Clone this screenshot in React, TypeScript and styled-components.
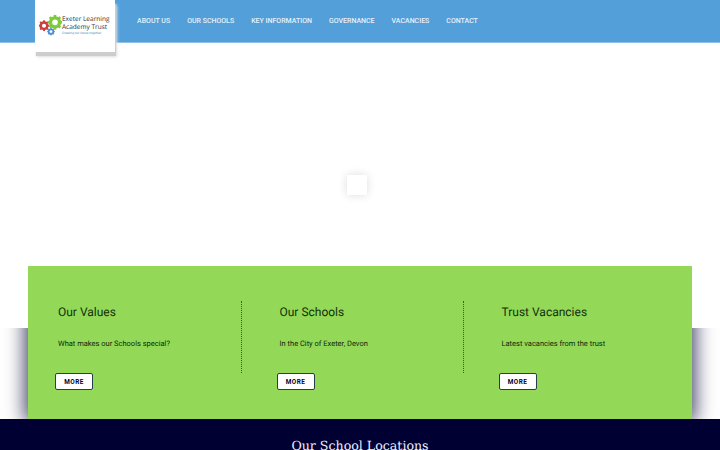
import React from "react";
import styled, { createGlobalStyle } from "styled-components";

const Global = createGlobalStyle`
  html, body { margin: 0; padding: 0; background: #fff; }
  body { font-family: Roboto, "Liberation Sans", sans-serif; overflow: hidden; height: 450px; text-rendering: geometricPrecision; }
`;
const Page = styled.div`
  width: 720px; height: 450px; overflow: hidden; display: flex; flex-direction: column;
`;
const Header = styled.header`
  height: 43px; flex: none; box-sizing: border-box; background: #529fd9; border-bottom: 1px solid #8cc0e8;
  display: flex; padding-left: 35px; position: relative; z-index: 4;
`;
const LogoCard = styled.div`
  width: 80px; height: 52px; flex: none; background: #fff; display: flex; align-items: center;
  padding: 0 0 0 4px; box-sizing: border-box;
  box-shadow: 1px 4px 1px 0 #cdcdcd, 2px 5px 3px #e2e2e2;
`;
const LogoText = styled.div`
  display: flex; flex-direction: column; align-items: flex-start; color: #2e2e2e; margin-top: -1px;
`;
const LogoLine = styled.span`
  font-size: 6.5px; line-height: 8.2px; font-family: "Open Sans", sans-serif; font-weight: 500; white-space: nowrap;
`;
const LogoTag = styled.span`
  font-size: 3.2px; line-height: 5px; color: #4a90c8; white-space: nowrap;
`;
const Nav = styled.nav`
  display: flex; gap: 17px; padding-left: 22px; align-items: center; height: 41px;
`;
const NavLink = styled.a`
  color: #e6f1fa; font-size: 7px; font-weight: 500; white-space: nowrap;
`;
const Hero = styled.div`
  height: 223px; flex: none; background: #fff; display: flex; align-items: flex-start; justify-content: center;
  padding: 132px 7px 0 0; box-sizing: border-box;
`;
const Loader = styled.div`
  width: 20px; height: 20px; background: #fff; box-shadow: 0 0 10px rgba(0,0,0,.14);
`;
const CardBand = styled.section`
  flex: none; padding: 0 28px 0 27.5px; position: relative; z-index: 2;
`;
const Card = styled.div`
  height: 153px; background: #93d957; position: relative;
  display: grid; grid-template-columns: 214px 222px 1fr; padding-top: 35px; box-sizing: border-box;
  &::before {
    content: ""; position: absolute; inset: 0; z-index: -1;
    box-shadow: 0 0 18px 3px rgba(0,0,51,.76);
    clip-path: inset(62px -40px 0 -40px);
  }
`;
const Col = styled.div<{ $first?: boolean; $last?: boolean }>`
  padding-left: ${p => (p.$first ? 30.5 : 38)}px; height: 72px; position: relative;
  border-right: ${p => (p.$last ? "0" : "1px dotted #3a5a30")};
  display: flex; flex-direction: column; align-items: flex-start;
`;
const Title = styled.h3`
  margin: 1px 0 0; font-size: 12px; line-height: 20px; font-weight: 400; color: #12300c; white-space: nowrap;
`;
const Body = styled.p`
  margin: 16px 0 0; font-size: 7.5px; line-height: 12px; color: #10280c; white-space: nowrap;
`;
const More = styled.button`
  margin: 23px 0 0 -3px; width: 38px; height: 17px; box-sizing: border-box; background: #fff;
  border: 1.5px solid #24404a; border-radius: 2px; font-family: Roboto, sans-serif; font-size: 6.4px;
  font-weight: 700; letter-spacing: 0.4px; color: #000033; padding: 0; flex: none;
`;
const Footer = styled.footer`
  flex: 1; background: #000033; display: flex; justify-content: center; padding-top: 18px;
  box-sizing: border-box; position: relative; z-index: 3;
`;
const FooterTitle = styled.h2`
  margin: 0; font-family: "DejaVu Serif", serif; font-weight: 400; font-size: 12.6px; line-height: 18px;
  color: #eef; white-space: nowrap;
`;

const Gear = ({ cx, cy, r, color }: { cx: number; cy: number; r: number; color: string }) => (
  <g>
    <circle cx={cx} cy={cy} r={r * 0.68} fill="none" stroke={color} strokeWidth={r * 0.5} />
    {Array.from({ length: 8 }).map((_, i) => (
      <rect
        key={i}
        x={cx - r * 0.2}
        y={cy - r * 1.12}
        width={r * 0.4}
        height={r * 0.4}
        fill={color}
        transform={`rotate(${i * 45} ${cx} ${cy})`}
      />
    ))}
  </g>
);

const GearLogo = styled.svg`
  width: 23px; height: 24px; flex: none;
`;

const items = [
  { t: "Our Values", b: "What makes our Schools special?" },
  { t: "Our Schools", b: "In the City of Exeter, Devon" },
  { t: "Trust Vacancies", b: "Latest vacancies from the trust" },
];

export default function App() {
  return (
    <Page>
      <Global />
      <Header>
        <LogoCard>
          <GearLogo viewBox="0 0 23 24">
            <Gear cx={5} cy={11.7} r={4.8} color="#c8403a" />
            <Gear cx={16} cy={8.3} r={6.6} color="#7ccb3c" />
            <Gear cx={12} cy={17.6} r={3.4} color="#4a8fd0" />
          </GearLogo>
          <LogoText>
            <LogoLine>Exeter Learning</LogoLine>
            <LogoLine>Academy Trust</LogoLine>
            <LogoTag>Creating our future together</LogoTag>
          </LogoText>
        </LogoCard>
        <Nav>
          {["ABOUT US", "OUR SCHOOLS", "KEY INFORMATION", "GOVERNANCE", "VACANCIES", "CONTACT"].map(n => (
            <NavLink key={n}>{n}</NavLink>
          ))}
        </Nav>
      </Header>
      <Hero>
        <Loader />
      </Hero>
      <CardBand>
        <Card>
          {items.map((c, i) => (
            <Col key={c.t} $first={i === 0} $last={i === 2}>
              <Title>{c.t}</Title>
              <Body>{c.b}</Body>
              <More>MORE</More>
            </Col>
          ))}
        </Card>
      </CardBand>
      <Footer>
        <FooterTitle>Our School Locations</FooterTitle>
      </Footer>
    </Page>
  );
}
